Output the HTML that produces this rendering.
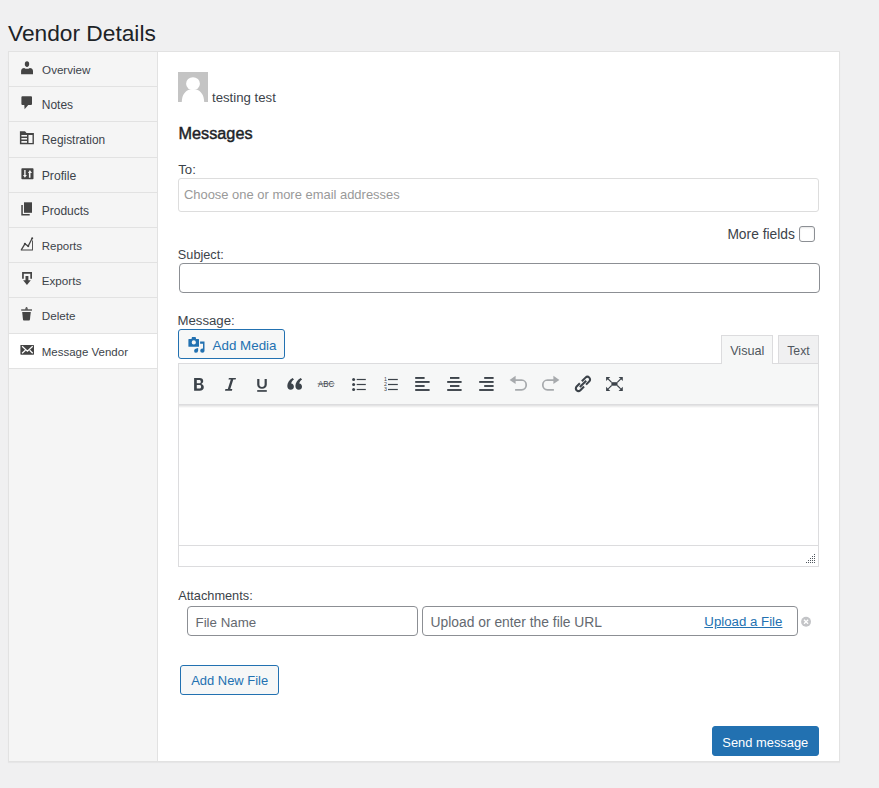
<!DOCTYPE html>
<html><head><meta charset="utf-8"><style>
html,body{margin:0;padding:0;width:879px;height:788px;overflow:hidden;background:#f0f0f1;font-family:"Liberation Sans", sans-serif}
.t{position:absolute;white-space:pre}
.r{position:absolute;display:block}
</style></head><body>
<div class="r" style="left:8px;top:51px;width:832px;height:711px;background:#fff;border:1px solid #e2e2e2;box-sizing:border-box;box-shadow:0 1px 1px rgba(0,0,0,.04)"></div>
<div class="r" style="left:9px;top:52px;width:148px;height:709px;background:#f5f5f5"></div>
<div class="r" style="left:157px;top:52px;width:1px;height:709px;background:#e2e2e2"></div>
<div class="r" style="left:9px;top:86px;width:148px;height:1px;background:#e2e2e2"></div>
<div class="r" style="left:9px;top:121px;width:148px;height:1px;background:#e2e2e2"></div>
<div class="r" style="left:9px;top:157px;width:148px;height:1px;background:#e2e2e2"></div>
<div class="r" style="left:9px;top:192px;width:148px;height:1px;background:#e2e2e2"></div>
<div class="r" style="left:9px;top:227px;width:148px;height:1px;background:#e2e2e2"></div>
<div class="r" style="left:9px;top:262px;width:148px;height:1px;background:#e2e2e2"></div>
<div class="r" style="left:9px;top:297px;width:148px;height:1px;background:#e2e2e2"></div>
<div class="r" style="left:9px;top:333px;width:148px;height:1px;background:#e2e2e2"></div>
<div class="r" style="left:9px;top:368px;width:148px;height:1px;background:#e2e2e2"></div>
<div class="r" style="left:9px;top:334px;width:148px;height:34px;background:#fff"></div>
<div class="t" style="left:7.97px;top:22.000px;font-size:22.740px;line-height:22.740px;color:#1d2327;font-weight:400;">Vendor Details</div>
<div class="t" style="left:42.12px;top:64.000px;font-size:11.602px;line-height:11.602px;color:#3c434a;font-weight:400;">Overview</div>
<div class="t" style="left:41.74px;top:99.000px;font-size:12.000px;line-height:12.000px;color:#3c434a;font-weight:400;">Notes</div>
<div class="t" style="left:41.75px;top:135.000px;font-size:11.888px;line-height:11.888px;color:#3c434a;font-weight:400;">Registration</div>
<div class="t" style="left:41.72px;top:170.000px;font-size:12.196px;line-height:12.196px;color:#3c434a;font-weight:400;">Profile</div>
<div class="t" style="left:41.74px;top:205.000px;font-size:12.010px;line-height:12.010px;color:#3c434a;font-weight:400;">Products</div>
<div class="t" style="left:41.78px;top:241.000px;font-size:11.475px;line-height:11.475px;color:#3c434a;font-weight:400;">Reports</div>
<div class="t" style="left:41.77px;top:275.000px;font-size:11.651px;line-height:11.651px;color:#3c434a;font-weight:400;">Exports</div>
<div class="t" style="left:41.77px;top:310.000px;font-size:11.661px;line-height:11.661px;color:#3c434a;font-weight:400;">Delete</div>
<div class="t" style="left:41.78px;top:347.000px;font-size:11.498px;line-height:11.498px;color:#3c434a;font-weight:400;">Message Vendor</div>
<svg class="r" style="left:17px;top:58px;" width="20" height="20" viewBox="0 0 20 20"><g fill="#444"><ellipse cx="10" cy="6.1" rx="2.2" ry="2.8"/><path d="M4.1 16.2 L4.1 13 C4.1 11 5.5 10 7.2 9.9 C8 10.5 9 10.8 10 10.8 C11 10.8 12 10.5 12.8 9.9 C14.5 10 16 11 16 13 L16 16.2 Z"/></g></svg>
<svg class="r" style="left:17px;top:93px;" width="20" height="20" viewBox="0 0 20 20"><g fill="#444"><path d="M5.4 3.3 H14 Q15 3.3 15 4.3 V10.9 Q15 11.9 14 11.9 H11.2 L7.6 16.2 L7.3 11.9 H5.4 Q4.4 11.9 4.4 10.9 V4.3 Q4.4 3.3 5.4 3.3 Z"/></g></svg>
<svg class="r" style="left:17px;top:128px;" width="20" height="20" viewBox="0 0 20 20"><g fill="#444"><path fill-rule="evenodd" d="M2.9 3.3 H8 L9.5 5.1 H16.9 V16.2 H2.9 Z M4.4 6.9 V8.4 H10 V6.9 Z M4.4 10 V11.4 H10 V10 Z M4.4 13.1 V14.7 H10 V13.1 Z M11.5 6.9 V15 H15.5 V6.9 Z"/></g></svg>
<svg class="r" style="left:17px;top:164px;" width="20" height="20" viewBox="0 0 20 20"><g fill="#444"><path fill-rule="evenodd" d="M5.2 4.3 H15.7 Q16.5 4.3 16.5 5.1 V14.4 Q16.5 15.2 15.7 15.2 H5.2 Q4.4 15.2 4.4 14.4 V5.1 Q4.4 4.3 5.2 4.3 Z M7.2 6.1 V10.9 H6 L7.9 13.7 L9.9 10.9 H8.6 V6.1 Z M12.9 6.1 L10.9 8.9 H11.9 V13.7 H13.5 V8.9 H15 Z"/></g></svg>
<svg class="r" style="left:17px;top:199px;" width="20" height="20" viewBox="0 0 20 20"><g fill="#444"><path d="M7 3.3 H15 V13.8 H7 Z"/><path d="M4.3 6.1 H5.8 V15 H12.7 V16.5 H4.3 Z"/></g></svg>
<svg class="r" style="left:17px;top:234px;" width="20" height="20" viewBox="0 0 20 20"><g fill="#444"><path d="M15 6.6 H15.9 V16.5 H3.8 V15.6 H15 Z"/><path d="M4.3 15.9 L7.9 9.9 L11.2 12.1 L15.2 4.3" fill="none" stroke="#444" stroke-width="1.3"/><circle cx="7.9" cy="9.9" r="1.1"/><circle cx="11.2" cy="12.1" r="1.1"/><circle cx="15.2" cy="4.3" r="1"/></g></svg>
<svg class="r" style="left:17px;top:269px;" width="20" height="20" viewBox="0 0 20 20"><g fill="#444"><path d="M5.1 3 H15 V9.8 H13.3 V4.7 H6.8 V9.8 H5.1 Z"/><path d="M8.5 7 H11.4 V11.2 H13.8 L9.95 16 L6.1 11.2 H8.5 Z"/></g></svg>
<svg class="r" style="left:17px;top:304px;" width="20" height="20" viewBox="0 0 20 20"><g fill="#444"><path d="M4.2 5.2 H8 L9 3 H10.1 L11 5.2 H15 V6.8 H4.2 Z" opacity=".85"/><path d="M5.2 7.9 H13.8 L12.9 15.8 Q12.8 16.5 12.1 16.5 H6.8 Q6.1 16.5 6 15.8 Z"/></g></svg>
<svg class="r" style="left:17px;top:340px;" width="20" height="20" viewBox="0 0 20 20"><g fill="#444"><path fill-rule="evenodd" d="M4 4.9 H16.4 Q17 4.9 17 5.5 V14.1 Q17 14.7 16.4 14.7 H4 Q3.4 14.7 3.4 14.1 V5.5 Q3.4 4.9 4 4.9 Z"/><path d="M5.1 6.3 L10.4 11.2 L15.7 6.3 M5.1 13.2 L8.4 10.2 M15.7 13.2 L12.7 10.2" fill="none" stroke="#fff" stroke-width="1.25"/></g></svg>
<svg class="r" style="left:178px;top:72px;" width="30" height="30" viewBox="0 0 30 30"><rect width="30" height="30" fill="#c4c4c4"/><ellipse cx="15" cy="11.7" rx="6.9" ry="6.5" fill="#fff"/><path d="M3.8 30 C3.9 23 7.5 18.4 12 17.6 Q15 18.6 18 17.6 C22.5 18.4 26.1 23 26.2 30 Z" fill="#fff"/></svg>
<div class="t" style="left:212.04px;top:91.000px;font-size:13.202px;line-height:13.202px;color:#3c434a;font-weight:400;">testing test</div>
<div class="t" style="left:178.60px;top:125.000px;font-size:16.239px;line-height:16.239px;color:#1d2327;font-weight:400;-webkit-text-stroke:0.45px #1d2327">Messages</div>
<div class="t" style="left:178.24px;top:163.000px;font-size:13.197px;line-height:13.197px;color:#3c434a;font-weight:400;">To:</div>
<div class="r" style="left:178px;top:178px;width:641px;height:34px;background:#fff;border:1px solid #dddddd;border-radius:3px;box-sizing:border-box"></div>
<div class="t" style="left:183.95px;top:189.000px;font-size:12.948px;line-height:12.948px;color:#999999;font-weight:400;">Choose one or more email addresses</div>
<div class="t" style="left:727.39px;top:228.000px;font-size:13.816px;line-height:13.816px;color:#3c434a;font-weight:400;">More fields</div>
<div class="r" style="left:799px;top:226px;width:16px;height:16px;background:#fff;border:1px solid #8c8f94;border-radius:3px;box-sizing:border-box;box-shadow:inset 0 1px 2px rgba(0,0,0,.1)"></div>
<div class="t" style="left:177.86px;top:249.000px;font-size:12.709px;line-height:12.709px;color:#3c434a;font-weight:400;">Subject:</div>
<div class="r" style="left:179px;top:263px;width:641px;height:30px;background:#fff;border:1px solid #8c8f94;border-radius:4px;box-sizing:border-box"></div>
<div class="t" style="left:177.44px;top:314.000px;font-size:13.221px;line-height:13.221px;color:#3c434a;font-weight:400;">Message:</div>
<div class="r" style="left:178px;top:329px;width:107px;height:30px;background:#f6f7f7;border:1px solid #2271b1;border-radius:3px;box-sizing:border-box"></div>
<svg class="r" style="left:185px;top:333px;" width="24" height="24" viewBox="0 0 24 24"><g fill="#2271b1"><path fill-rule="evenodd" d="M3.9 5.9 H6.5 L7 4 H10.6 L11.1 5.9 H13.5 Q14 5.9 14 6.4 V13.2 Q14 13.7 13.5 13.7 H3.9 Q3.4 13.7 3.4 13.2 V6.4 Q3.4 5.9 3.9 5.9 Z M8.8 7.3 A2.1 2.1 0 1 0 8.8 11.5 A2.1 2.1 0 1 0 8.8 7.3 Z"/><path d="M15.1 8.5 H19.5 V18 Q19.5 19.8 17.4 19.8 Q15.2 19.8 15.2 17.8 Q15.2 15.6 17.6 15.6 L18 15.6 V10.7 H15.1 Z"/><path d="M13.1 15 V17.8 Q13.1 19.8 11 19.8 Q9.1 19.8 9.1 17.9 Q9.1 15.6 13.1 15 Z"/></g></svg>
<div class="t" style="left:212.60px;top:339.000px;font-size:13.368px;line-height:13.368px;color:#2271b1;font-weight:400;">Add Media</div>
<div class="r" style="left:721px;top:335px;width:52px;height:30px;background:#f6f7f7;border:1px solid #dcdcde;border-bottom:none;box-sizing:border-box"></div>
<div class="t" style="left:730.17px;top:345.000px;font-size:12.662px;line-height:12.662px;color:#50575e;font-weight:400;">Visual</div>
<div class="r" style="left:778px;top:335px;width:41px;height:29px;background:#f0f0f1;border:1px solid #dcdcde;box-sizing:border-box"></div>
<div class="t" style="left:787.25px;top:345.000px;font-size:12.265px;line-height:12.265px;color:#50575e;font-weight:400;">Text</div>
<div class="r" style="left:178px;top:363px;width:641px;height:204px;background:#fff;border:1px solid #dcdcde;box-sizing:border-box"></div>
<div class="r" style="left:179px;top:364px;width:639px;height:40px;background:#f6f7f7"></div>
<div class="r" style="left:179px;top:404px;width:639px;height:1px;background:#dcdcde"></div>
<div class="r" style="left:179px;top:405px;width:639px;height:1px;background:#e4e4e5"></div>
<div class="r" style="left:179px;top:406px;width:639px;height:1px;background:#efefef"></div>
<div class="r" style="left:179px;top:407px;width:639px;height:1px;background:#f9f9f9"></div>
<div class="r" style="left:722px;top:363px;width:50px;height:2px;background:#f6f7f7"></div>
<div class="r" style="left:179px;top:545px;width:639px;height:1px;background:#dcdcde"></div>
<svg class="r" style="left:188px;top:372px;" width="24" height="24" viewBox="0 0 24 24"><g fill="#3c434a"><path fill-rule="evenodd" d="M6.1 5.9 H11.6 C14 5.9 15.2 7.1 15.2 9.1 C15.2 10.4 14.5 11.4 13.4 11.9 C14.9 12.3 15.8 13.5 15.8 15.2 C15.8 17.4 14.2 18.7 11.7 18.7 H6.1 Z M8.8 8.1 V11.3 H11.2 C12.3 11.3 12.8 10.7 12.8 9.7 C12.8 8.6 12.3 8.1 11.2 8.1 Z M8.8 13.1 V16.6 H11.5 C12.6 16.6 13.1 16 13.1 14.85 C13.1 13.7 12.6 13.1 11.5 13.1 Z"/></g></svg>
<svg class="r" style="left:218px;top:372px;" width="24" height="24" viewBox="0 0 24 24"><g fill="#3c434a"><path d="M10.9 5.9 H18 L17.6 7.6 H15.3 L12.3 17 H14.3 L13.9 18.7 H7 L7.4 17 H9.8 L12.8 7.6 H10.5 Z"/></g></svg>
<svg class="r" style="left:250px;top:372px;" width="24" height="24" viewBox="0 0 24 24"><g fill="#3c434a"><path d="M7.2 7 H9.4 V12.6 C9.4 14.1 10.4 14.9 12 14.9 C13.6 14.9 14.6 14.1 14.6 12.6 V7 H16.8 V12.6 C16.8 15.3 15 16.8 12 16.8 C9 16.8 7.2 15.3 7.2 12.6 Z"/><rect x="7.2" y="18.1" width="9.6" height="1.7"/></g></svg>
<svg class="r" style="left:282px;top:372px;" width="24" height="24" viewBox="0 0 24 24"><g fill="#3c434a"><path d="M10.6 5.9 L12 7.6 C10.4 8.6 9.5 9.9 9.2 11.5 C10.8 11.6 11.9 12.9 11.9 14.7 C11.9 16.5 10.5 17.8 8.7 17.8 C6.7 17.8 5.3 16.4 5.3 14 C5.3 10.6 7.3 7.8 10.6 5.9 Z"/><path transform="translate(8.1 0)" d="M10.6 5.9 L12 7.6 C10.4 8.6 9.5 9.9 9.2 11.5 C10.8 11.6 11.9 12.9 11.9 14.7 C11.9 16.5 10.5 17.8 8.7 17.8 C6.7 17.8 5.3 16.4 5.3 14 C5.3 10.6 7.3 7.8 10.6 5.9 Z"/></g></svg>
<svg class="r" style="left:314px;top:372px;" width="24" height="24" viewBox="0 0 24 24"><g fill="#3c434a"><text x="4.1" y="14.9" font-size="8.5" font-family="Liberation Sans" font-weight="400" textLength="16" lengthAdjust="spacingAndGlyphs">ABC</text><rect x="3.6" y="11.3" width="17" height="0.9" opacity=".7"/></g></svg>
<svg class="r" style="left:346px;top:372px;" width="24" height="24" viewBox="0 0 24 24"><g fill="#3c434a"><circle cx="7.6" cy="7.5" r="1.5"/><circle cx="7.6" cy="12.5" r="1.5"/><circle cx="7.6" cy="17.5" r="1.5"/><rect x="10.7" y="6.9" width="9.1" height="1.2"/><rect x="10.7" y="11.9" width="9.1" height="1.2"/><rect x="10.7" y="16.9" width="9.1" height="1.2"/></g></svg>
<svg class="r" style="left:378px;top:372px;" width="24" height="24" viewBox="0 0 24 24"><g fill="#3c434a"><text x="6" y="8.8" font-size="5.3" font-family="Liberation Sans" font-weight="400">1</text><text x="6" y="13.9" font-size="5.3" font-family="Liberation Sans" font-weight="400">2</text><text x="6" y="19" font-size="5.3" font-family="Liberation Sans" font-weight="400">3</text><rect x="10" y="6.9" width="9.8" height="1.2"/><rect x="10" y="11.9" width="9.8" height="1.2"/><rect x="10" y="16.9" width="9.8" height="1.2"/></g></svg>
<svg class="r" style="left:410px;top:372px;" width="24" height="24" viewBox="0 0 24 24"><g fill="#3c434a"><rect x="5.2" y="5" width="9.4" height="1.9"/><rect x="5.2" y="9" width="14.4" height="1.9"/><rect x="5.2" y="13.05" width="9.4" height="1.9"/><rect x="5.2" y="17.05" width="14.4" height="1.9"/></g></svg>
<svg class="r" style="left:442px;top:372px;" width="24" height="24" viewBox="0 0 24 24"><g fill="#3c434a"><rect x="8.0" y="5" width="9.4" height="1.9"/><rect x="5.2" y="9" width="14.4" height="1.9"/><rect x="8.0" y="13.05" width="9.4" height="1.9"/><rect x="5.2" y="17.05" width="14.4" height="1.9"/></g></svg>
<svg class="r" style="left:474px;top:372px;" width="24" height="24" viewBox="0 0 24 24"><g fill="#3c434a"><rect x="10.2" y="5" width="9.4" height="1.9"/><rect x="5.2" y="9" width="14.4" height="1.9"/><rect x="10.2" y="13.05" width="9.4" height="1.9"/><rect x="5.2" y="17.05" width="14.4" height="1.9"/></g></svg>
<svg class="r" style="left:506px;top:372px;" width="24" height="24" viewBox="0 0 24 24"><g fill="#a7aaad"><path d="M3.6 7.9 L9.6 3.7 V12.1 Z"/><path d="M9 8 H15.5 A4.93 4.93 0 0 1 15.5 17.85 H9.1" fill="none" stroke="#a7aaad" stroke-width="1.75"/></g></svg>
<svg class="r" style="left:538px;top:372px;" width="24" height="24" viewBox="0 0 24 24"><g fill="#a7aaad"><g transform="translate(25 0) scale(-1 1)"><path d="M3.6 7.9 L9.6 3.7 V12.1 Z"/><path d="M9 8 H15.5 A4.93 4.93 0 0 1 15.5 17.85 H9.1" fill="none" stroke="#a7aaad" stroke-width="1.75"/></g></g></svg>
<svg class="r" style="left:571px;top:372px;" width="24" height="24" viewBox="0 0 24 24"><g fill="#3c434a"><g transform="translate(11.95 11.95) rotate(-45)" fill="none" stroke="#3c434a" stroke-width="2.1"><path d="M1.1 -2.65 H6.3 A2.65 2.65 0 0 1 6.3 2.65 H1.7"/><path d="M-1.1 2.65 H-6.3 A2.65 2.65 0 0 1 -6.3 -2.65 H-1.7"/><path d="M-4.4 0 H4.6" stroke-width="2"/></g></g></svg>
<svg class="r" style="left:602px;top:372px;" width="24" height="24" viewBox="0 0 24 24"><g fill="#3c434a"><rect x="9.4" y="10.2" width="6.1" height="3.5"/><path d="M4.1 4.9 H8.3 L4.1 9 Z M20.8 4.9 H16.6 L20.8 9 Z M4.1 18.9 H8.3 L4.1 14.8 Z M20.8 18.9 H16.6 L20.8 14.8 Z"/><path d="M6.2 7 L9.6 10.4 M18.7 7 L15.3 10.4 M6.2 16.8 L9.6 13.5 M18.7 16.8 L15.3 13.5" stroke="#3c434a" stroke-width="1.1"/></g></svg>
<svg class="r" style="left:0px;top:0px;pointer-events:none" width="879" height="788" viewBox="0 0 879 788"><g fill="#50575e"><rect x="814" y="554" width="1" height="1"/><rect x="814" y="556" width="1" height="1"/><rect x="812" y="556" width="1" height="1"/><rect x="814" y="558" width="1" height="1"/><rect x="812" y="558" width="1" height="1"/><rect x="810" y="558" width="1" height="1"/><rect x="814" y="560" width="1" height="1"/><rect x="812" y="560" width="1" height="1"/><rect x="810" y="560" width="1" height="1"/><rect x="808" y="560" width="1" height="1"/><rect x="814" y="562" width="1" height="1"/><rect x="812" y="562" width="1" height="1"/><rect x="810" y="562" width="1" height="1"/><rect x="808" y="562" width="1" height="1"/><rect x="806" y="562" width="1" height="1"/></g></svg>
<div class="t" style="left:178.20px;top:590.000px;font-size:12.787px;line-height:12.787px;color:#3c434a;font-weight:400;">Attachments:</div>
<div class="r" style="left:187px;top:606px;width:231px;height:30px;background:#fff;border:1px solid #8c8f94;border-radius:4px;box-sizing:border-box"></div>
<div class="t" style="left:195.53px;top:616.000px;font-size:13.341px;line-height:13.341px;color:#646970;font-weight:400;">File Name</div>
<div class="r" style="left:422px;top:606px;width:376px;height:30px;background:#fff;border:1px solid #8c8f94;border-radius:4px;box-sizing:border-box"></div>
<div class="t" style="left:430.59px;top:616.000px;font-size:13.844px;line-height:13.844px;color:#646970;font-weight:400;">Upload or enter the file URL</div>
<div class="t" style="left:704.34px;top:615.000px;font-size:13.258px;line-height:13.258px;color:#2271b1;font-weight:400;text-decoration:underline">Upload a File</div>
<svg class="r" style="left:796px;top:612px;" width="20" height="20" viewBox="0 0 20 20"><circle cx="10.05" cy="9.75" r="4.95" fill="#c3c4c7"/><path d="M8 7.7 L12.1 11.8 M12.1 7.7 L8 11.8" stroke="#fff" stroke-width="1.3"/></svg>
<div class="r" style="left:180px;top:665px;width:99px;height:30px;background:#f6f7f7;border:1px solid #2271b1;border-radius:3px;box-sizing:border-box"></div>
<div class="t" style="left:191.20px;top:675.000px;font-size:12.949px;line-height:12.949px;color:#2271b1;font-weight:400;">Add New File</div>
<div class="r" style="left:712px;top:726px;width:107px;height:30px;background:#2271b1;border:1px solid #2271b1;border-radius:3px;box-sizing:border-box"></div>
<div class="t" style="left:722.36px;top:737.000px;font-size:12.888px;line-height:12.888px;color:#fff;font-weight:400;">Send message</div>
</body></html>
